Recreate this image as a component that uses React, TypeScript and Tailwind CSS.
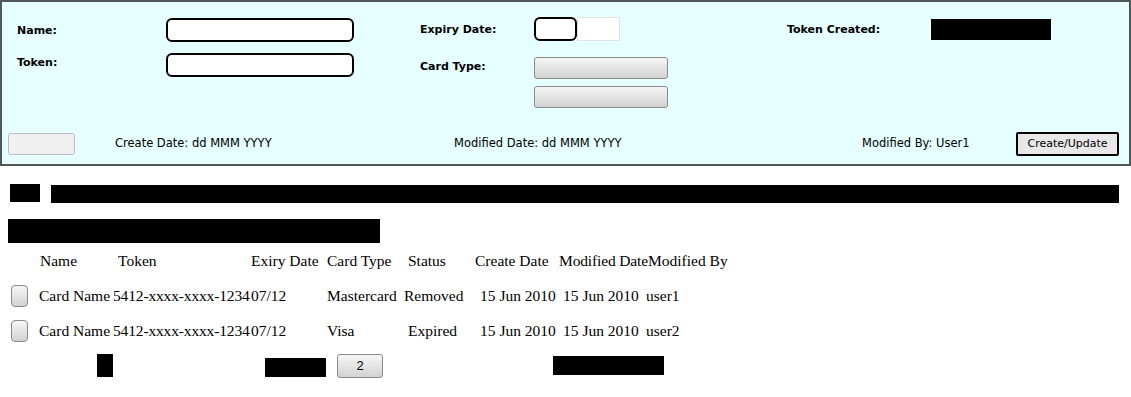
import React from 'react';

const rows = [
  { name: 'Card Name', token: '5412-xxxx-xxxx-1234', exp: '07/12', type: 'Mastercard', status: 'Removed', created: '15 Jun 2010', modified: '15 Jun 2010', by: 'user1' },
  { name: 'Card Name', token: '5412-xxxx-xxxx-1234', exp: '07/12', type: 'Visa', status: 'Expired', created: '15 Jun 2010', modified: '15 Jun 2010', by: 'user2' },
];

const sketchInput = 'bg-white border-2 border-black rounded-[6px] h-[24px]';
const grayButton = 'bg-gradient-to-b from-[#f6f6f6] to-[#d2d2d2] border border-[#8a8a8a] rounded-[3px]';
const label = 'font-bold text-[11px] text-black';

export default function App() {
  return (
    <div className="w-[1131px] h-[397px] bg-white overflow-hidden">
      {/* Card form panel */}
      <div className="h-[166px] border-2 border-[#4f5757] bg-[#e6ffff] flex flex-col font-['DejaVu_Sans',sans-serif]">
        <div className="flex pl-[15px] pt-[16px]">
          {/* Name / Token */}
          <div className="w-[403px] flex flex-col gap-[11px]">
            <div className="flex items-center h-[24px]">
              <span className={`${label} w-[149px] mt-[2px]`}>Name:</span>
              <div className={`${sketchInput} w-[188px]`} />
            </div>
            <div className="flex items-start h-[24px]">
              <span className={`${label} w-[149px] mt-[2px]`}>Token:</span>
              <div className={`${sketchInput} w-[188px]`} />
            </div>
          </div>

          {/* Expiry / Card type */}
          <div className="w-[367px] flex flex-col">
            <div className="flex items-center h-[24px] -mt-[1px]">
              <span className={`${label} w-[114px] mt-[3px]`}>Expiry Date:</span>
              <div className={`${sketchInput} w-[43px]`} />
              <div className="w-[43px] h-[24px] bg-white border border-[#e2e2e2]" />
            </div>
            <div className="flex mt-[16px]">
              <span className={`${label} w-[114px] mt-[2px]`}>Card Type:</span>
              <div className="flex flex-col gap-[7px]">
                <div className={`${grayButton} w-[134px] h-[22px]`} />
                <div className={`${grayButton} w-[134px] h-[22px]`} />
              </div>
            </div>
          </div>

          {/* Token created */}
          <div className="flex items-center h-[24px] -mt-[1px]">
            <span className={`${label} w-[144px] mt-[3px]`}>Token Created:</span>
            <div className="w-[120px] h-[21px] bg-black" />
          </div>
        </div>

        <div className="mt-auto flex items-center pl-[6px] pb-[8px] text-[11.5px] text-black">
          <div className="w-[67px] h-[22px] bg-[#f0f0f0] border border-[#bdbdbd] rounded-[3px]" />
          <span className="ml-[40px] w-[339px]">Create Date: dd MMM YYYY</span>
          <span className="w-[408px]">Modified Date: dd MMM YYYY</span>
          <span className="w-[154px]">Modified By: User1</span>
          <button className="w-[103px] h-[24px] bg-[#e8e8e8] border-2 border-black rounded-[2px] text-[11px]">
            Create/Update
          </button>
        </div>
      </div>

      {/* Redacted header bars */}
      <div className="flex items-start pt-[18px] pl-[10px]">
        <div className="w-[30px] h-[18px] bg-black" />
        <div className="ml-[11px] w-[1068px] h-[18px] mt-[1px] bg-black" />
      </div>
      <div className="ml-[8px] mt-[16px] w-[372px] h-[24px] bg-black" />

      {/* Cards table */}
      <div className="font-['Liberation_Serif',serif] text-[15.5px] text-black whitespace-nowrap">
        <div className="grid grid-cols-[31px_74px_138px_76px_77px_71px_84px_87px_1fr] pl-[8px] h-[35px] items-center">
          <span />
          <span className="pl-[1px]">Name</span>
          <span className="pl-[5px]">Token</span>
          <span>Exiry Date</span>
          <span>Card Type</span>
          <span className="pl-[4px]">Status</span>
          <span>Create Date</span>
          <span className="tracking-[-0.15px]">Modified Date</span>
          <span className="pl-[2px]">Modified By</span>
        </div>
        {rows.map((r, i) => (
          <div key={i} className="grid grid-cols-[31px_74px_138px_76px_77px_71px_84px_87px_1fr] pl-[8px] h-[35px] items-center">
            <div className={`${grayButton} ml-[3px] w-[17px] h-[22px] rounded-[4px]`} />
            <span>{r.name}</span>
            <span className="tracking-[-0.15px]">{r.token}</span>
            <span>{r.exp}</span>
            <span>{r.type}</span>
            <span className={r.status === 'Expired' ? 'pl-[4px]' : ''}>{r.status}</span>
            <span className="pl-[5px]">{r.created}</span>
            <span className="pl-[4px]">{r.modified}</span>
            <span>{r.by}</span>
          </div>
        ))}

        {/* Pager */}
        <div className="flex items-center h-[35px]">
          <div className="ml-[97px] w-[16px] h-[23px] bg-black" />
          <div className="ml-[152px] w-[61px] h-[19px] mt-[4px] bg-black" />
          <button className={`${grayButton} ml-[11px] w-[46px] h-[24px] font-['Liberation_Sans',sans-serif] text-[13px]`}>
            2
          </button>
          <div className="ml-[170px] w-[111px] h-[19px] bg-black" />
        </div>
      </div>
    </div>
  );
}
